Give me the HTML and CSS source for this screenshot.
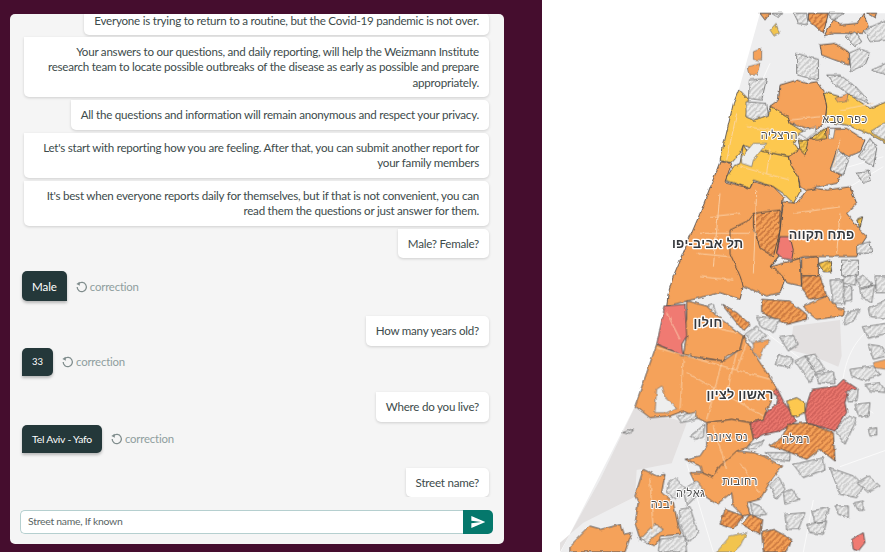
FILE: index.html
```
<!DOCTYPE html>
<html lang="en">
<head>
<meta charset="utf-8">
<title>Covid-19 report</title>
<link rel="stylesheet" href="styles.css">
</head>
<body>
<main class="chat-side">
  <section class="card">
    <div class="messages">
      <p class="bot bot-first">Everyone is trying to return to a routine, but the Covid-19 pandemic is not over.</p>
      <p class="bot">Your answers to our questions, and daily reporting, will help the Weizmann Institute research team to locate possible outbreaks of the disease as early as possible and prepare appropriately.</p>
      <p class="bot">All the questions and information will remain anonymous and respect your privacy.</p>
      <p class="bot">Let's start with reporting how you are feeling. After that, you can submit another report for your family members</p>
      <p class="bot">It's best when everyone reports daily for themselves, but if that is not convenient, you can read them the questions or just answer for them.</p>
      <p class="bot">Male? Female?</p>
      <div class="answer gap-a">
        <span class="user user-lg">Male</span>
        <span class="fix"><svg class="fix-icon" viewBox="0 0 24 24"><path d="M6.5 7A8.5 8.5 0 1 1 4 13"/><path class="fix-head" d="M2.5 7.5 8.5 3 9 10.5z"/></svg>correction</span>
      </div>
      <p class="bot gap-b">How many years old?</p>
      <div class="answer gap-d">
        <span class="user user-num">33</span>
        <span class="fix"><svg class="fix-icon" viewBox="0 0 24 24"><path d="M6.5 7A8.5 8.5 0 1 1 4 13"/><path class="fix-head" d="M2.5 7.5 8.5 3 9 10.5z"/></svg>correction</span>
      </div>
      <p class="bot gap-e">Where do you live?</p>
      <div class="answer">
        <span class="user user-sm">Tel Aviv - Yafo</span>
        <span class="fix"><svg class="fix-icon" viewBox="0 0 24 24"><path d="M6.5 7A8.5 8.5 0 1 1 4 13"/><path class="fix-head" d="M2.5 7.5 8.5 3 9 10.5z"/></svg>correction</span>
      </div>
      <p class="bot gap-b">Street name?</p>
    </div>
    <form class="composer">
      <input class="composer-input" type="text" placeholder="Street name, If known">
      <button class="composer-send" type="button" aria-label="Send"><svg viewBox="0 0 24 24" class="send-icon"><path d="M2 21l21-9L2 3v7l15 2-15 2z"/></svg></button>
    </form>
  </section>
</main>
<aside class="map-side">
<svg class="map" viewBox="6 0 1029 1656" preserveAspectRatio="xMinYMin slice">
  <defs>
    <pattern id="hg" width="12" height="12" patternUnits="userSpaceOnUse" patternTransform="rotate(-45)"><rect width="12" height="12" fill="#eeeeee"/><rect width="12" height="5" fill="#c6c6c6"/></pattern>
    <pattern id="ho" width="13" height="13" patternUnits="userSpaceOnUse" patternTransform="rotate(-45)"><rect width="13" height="13" fill="#f5a258"/><rect width="13" height="5" fill="#c9773f"/></pattern>
    <pattern id="hr" width="10" height="10" patternUnits="userSpaceOnUse" patternTransform="rotate(-45)"><rect width="10" height="10" fill="#ee7a70"/><rect width="10" height="4" fill="#c75a55"/></pattern>
    <pattern id="hy" width="12" height="12" patternUnits="userSpaceOnUse" patternTransform="rotate(-45)"><rect width="12" height="12" fill="#fbc850"/><rect width="12" height="5" fill="#c9a040"/></pattern>
    <filter id="rough" filterUnits="userSpaceOnUse" x="0" y="0" width="1040" height="1660" color-interpolation-filters="sRGB">
      <feTurbulence type="fractalNoise" baseFrequency="0.05" numOctaves="2" seed="4" result="n"/>
      <feDisplacementMap in="SourceGraphic" in2="n" scale="10" xChannelSelector="R" yChannelSelector="G"/>
      <feGaussianBlur stdDeviation="0.9"/>
    </filter>
    <filter id="soft" filterUnits="userSpaceOnUse" x="0" y="0" width="1040" height="1660"><feGaussianBlur stdDeviation="0.9"/></filter>
  </defs>

  <g class="base" filter="url(#soft)">
    <polygon class="land" points="660,40 1040,40 1040,1660 60,1660 285,1218 350,1030 375,920 420,828 480,640 540,480 597,268"/>
    <polygon class="sand" points="285,1220 330,1252 400,1256 440,1270 395,1390 290,1410 285,1490 130,1568 60,1628 60,1656 180,1440"/>
    <polygon class="sand" points="760,978 900,960 905,1068 895,1100 810,1065 750,1050"/>
    <path class="road-g" d="M690,190 640,300M860,520 1030,470M930,560 1030,500M680,1000 1000,1240M900,1400 1040,1350M820,1500 790,1656M440,1390 520,1656M1040,960C960,990 910,1060 905,1180M830,240 770,160"/>
  </g>

  <g filter="url(#rough)">
    <polygon class="y" points="597,268 625,297 618,350 640,360 685,345 690,318 745,350 750,370 790,395 775,405 760,430 775,450 750,470 650,450 610,435 600,460 575,488 540,482 580,310"/>
    <polygon class="y" points="610,435 600,490 580,500 555,540 630,565 640,540 700,560 730,580 760,610 780,575 775,530 750,490 745,470 650,450 625,460"/>
    <polygon class="y" points="850,275 900,290 930,285 990,325 1040,305 1040,430 985,400 920,375 855,365 860,320"/>
    <polygon class="o" points="690,318 715,300 720,255 770,240 800,250 830,245 850,275 860,320 855,365 835,385 800,385 750,370 745,350"/>
    <polygon class="o" points="775,450 800,420 860,385 920,385 975,420 960,455 925,470 890,450 870,510 905,525 890,550 860,555 830,560 800,575 780,560 775,530 750,490 745,470"/>
    <polygon class="o" points="540,485 575,490 555,545 630,565 640,545 700,560 730,590 725,630 715,770 690,800 738,828 720,878 680,888 610,858 600,898 540,878 500,888 440,903 380,918 385,878 400,828 480,640"/>
    <polygon class="o" points="730,605 770,610 800,570 830,565 860,570 930,560 950,610 920,640 960,690 980,710 960,740 950,770 880,770 790,770 760,780 710,760 720,690"/>
    <polygon class="o" points="690,800 780,775 785,858 740,848 730,828"/>
    <polygon class="o" points="785,775 835,770 835,828 785,828"/>
    <polygon class="o" points="850,110 880,60 900,75 950,70 970,40 985,80 965,100 880,100"/>
    <polygon class="o" points="840,135 885,130 925,155 925,195 845,165"/>
    <polygon class="o" points="980,40 1010,40 1005,55"/>
    <polygon class="o" points="660,40 690,40 675,60"/>
    <polygon class="o-s" points="640,155 665,145 665,180 640,178"/>
    <polygon class="o-s" points="625,200 660,190 650,225 630,225"/>
    <polygon class="o-s" points="885,295 925,280 920,305 895,308"/>
    <polygon class="y-s" points="690,90 708,70 718,100 702,108"/>
    <polygon class="hg" points="695,40 725,40 715,52"/>
    <polygon class="hg" points="760,40 800,40 805,75 775,70"/>
    <polygon class="ho" points="805,40 865,40 850,100 805,60"/>
    <polygon class="hg" points="865,40 910,40 880,60 870,50"/>
    <polygon class="hg" points="925,160 960,145 990,160 975,195 930,215"/>
    <polygon class="hg" points="970,90 1040,60 1040,120 990,125"/>
    <polygon class="hg" points="915,110 945,95 965,125 945,140"/>
    <polygon class="hg" points="995,210 1040,190 1040,225"/>
    <polygon class="hg" points="628,240 680,235 665,300 625,295"/>
    <polygon class="hg" points="618,305 680,310 685,345 640,360 618,350"/>
    <polygon class="hg" points="770,160 835,178 835,240 770,225"/>
    <polygon class="hg" points="860,225 900,225 940,255 990,310 930,285 880,250"/>
    <polygon class="hg" points="990,395 1040,365 1040,425"/>
    <polygon class="hg" points="955,470 990,415 1010,445 1000,500 975,485"/>
    <polygon class="hg" points="950,520 985,510 990,540 970,550"/>
    <polygon class="hg" points="870,510 895,450 925,480 910,525"/>
    <polygon class="hy" points="810,415 855,385 860,415 830,420"/>
    <polygon class="plain" points="865,385 885,385 880,415 865,415"/>
    <polygon class="plain" points="775,400 830,378 830,395 800,415"/>
    <polygon class="hy" points="775,420 805,420 795,465 780,450"/>
    <polygon class="plain" points="605,470 640,430 680,430 640,480 635,500 605,490"/>
    <polygon class="hg" points="905,780 955,780 955,828 905,828"/>
    <polygon class="hy" points="835,790 870,780 875,815 850,815"/>
    <polygon class="hg" points="950,735 990,725 995,760 950,760"/>
    <polygon class="hy" points="950,660 968,650 960,685"/>
    <polygon class="ho" points="640,640 720,630 720,690 700,770 660,745 640,680"/>
    <polygon class="r" points="720,710 750,710 760,750 755,780 730,775 710,760"/>
    <path class="road" d="M590,340 560,480M620,380 760,400M600,500 750,540M690,450 680,520M750,360 840,350M900,420 880,500M540,580 520,800M650,570 640,820M480,700 630,700M760,640 900,620M900,640 890,760M900,330 1000,310M510,650 600,640M470,760 570,770M580,840 480,830"/>
    <polyline class="inner" points="640,640 620,665 570,690 570,760 600,828 610,858"/>
    <polyline class="inner" points="690,800 715,770"/>

    <g transform="translate(0 828)">
      <polygon class="o" points="790,90 860,60 890,95 915,100 910,120 830,130 805,110"/>
      <polygon class="ho" points="785,0 840,0 860,60 810,70 785,40"/>
      <polygon class="ho" points="665,70 750,75 800,115 800,130 740,145 665,110"/>
      <polygon class="ho" points="545,85 590,110 630,145 610,165"/>
      <polygon class="hg" points="490,95 520,85 530,115 505,110"/>
      <polygon class="hg" points="615,175 650,150 680,180 640,205"/>
      <polygon class="hg" points="650,120 720,130 700,170 660,150"/>
      <polygon class="hg" points="870,12 910,12 915,85 880,85"/>
      <polygon class="hg" points="910,32 935,32 935,72 910,77"/>
      <polygon class="hg" points="910,0 950,0 945,27 910,22"/>
      <polygon class="hg" points="950,12 970,0 1000,27 960,37"/>
      <polygon class="hg" points="960,42 1005,27 995,77 965,67"/>
      <polygon class="hg" points="1005,0 1040,0 1040,50 1010,50"/>
      <polygon class="hg" points="985,97 1040,72 1040,127 990,122"/>
      <polygon class="hg" points="910,142 925,107 960,102 945,132 915,147"/>
      <polygon class="hg" points="970,152 1040,142 1040,172 985,187"/>
      <polygon class="hg" points="720,185 760,178 775,205 745,225"/>
      <polygon class="hg" points="715,235 760,250 750,275 705,265"/>
      <polygon class="hg" points="765,255 795,240 830,290 810,320"/>
      <polygon class="hg" points="795,240 825,235 855,280 830,290"/>
      <polygon class="hg" points="830,295 880,285 885,320 835,320"/>
      <polygon class="hg" points="930,280 1000,270 1020,295 975,315 935,300"/>
      <polygon class="hg" points="985,205 1020,210 1040,240 1000,250"/>
      <polygon class="hg" points="975,325 1020,320 1040,350 990,345"/>
      <polygon class="o-s" points="1000,260 1040,250 1040,280 1005,275"/>
      <polygon class="o-s" points="640,200 690,190 670,220 660,250 640,225"/>
      <polygon class="o" points="440,75 500,90 530,120 570,150 610,180 600,220 560,240 550,255 430,235 440,180 420,205 440,130"/>
      <polygon class="r" points="375,90 435,85 440,180 425,205 430,240 390,220 350,205"/>
      <polygon class="o" points="350,205 430,240 550,255 600,220 610,180 640,230 710,335 680,400 670,430 630,440 575,430 500,440 430,405 390,420 330,425 285,390"/>
      <polygon class="plain" points="345,410 350,340 365,330 380,370 410,395 380,410"/>
      <polygon class="hr" points="710,335 730,375 770,435 720,465 670,475 640,490 630,440 670,430 680,405 710,385 715,360 695,350"/>
      <polygon class="hr" points="815,340 890,330 910,310 955,340 925,345 915,380 920,410 885,465 800,440 795,410 805,370"/>
      <polygon class="ho" points="745,445 800,440 880,470 885,555 840,520 800,550 740,525 690,510 725,485"/>
      <polygon class="y" points="740,375 770,365 795,380 795,410 770,420 755,420"/>
      <polygon class="hg" points="920,345 955,340 950,375 925,378"/>
      <polygon class="hg" points="945,385 990,380 985,420 955,420"/>
      <polygon class="hg" points="885,465 925,420 950,430 915,505"/>
      <polygon class="hg" points="410,420 470,408 470,430 425,440"/>
      <polygon class="hg" points="450,480 495,445 490,480 465,490"/>
      <polygon class="hg" points="245,470 280,458 270,475"/>
      <polygon class="hg" points="675,530 750,530 750,555 700,550"/>
      <polygon class="hg" points="760,565 850,545 855,580 790,605"/>
      <polygon class="hg" points="620,510 670,495 650,520 625,520"/>
      <polygon class="hg" points="870,575 940,600 970,630 950,665 900,655"/>
      <polygon class="hg" points="950,620 985,600 1020,630 985,650"/>
      <polygon class="hg" points="985,460 1010,455 1010,480 990,480"/>
      <polygon class="hg" points="940,680 970,675 970,700 950,700"/>
      <polygon class="o" points="500,440 575,430 630,440 640,490 620,515 590,525 580,545 540,570 520,605 485,590 480,570 435,550 480,540 500,510"/>
      <polygon class="o" points="450,590 485,590 520,605 540,570 590,525 640,530 670,540 725,570 695,610 660,670 620,680 630,715 610,720 580,690 575,650 530,685 480,650"/>
      <polygon class="hg" points="385,620 405,605 440,640 410,670 380,650"/>
      <polygon class="hg" points="430,640 470,615 490,640 440,690"/>
      <polygon class="hg" points="690,630 715,600 735,640 710,670"/>
      <polygon class="hg" points="730,650 755,640 780,670 735,685"/>
      <polygon class="hg" points="735,715 795,710 775,760 740,760"/>
      <polygon class="hg" points="630,680 660,690 680,715 640,720"/>
      <polygon class="hg" points="815,705 865,695 855,735 825,740"/>
      <polygon class="hg" points="800,745 860,735 850,775 810,770"/>
      <polygon class="hg" points="885,690 925,690 925,725 895,715"/>
      <polygon class="o" points="310,580 350,600 375,595 365,650 400,680 415,750 425,775 365,780 345,810 300,790 285,740 295,680 285,660"/>
      <polygon class="hg" points="420,700 450,695 475,770 445,800 415,740"/>
      <polygon class="hg" points="300,790 345,745 370,760 345,780 320,800"/>
      <polygon class="hg" points="360,790 435,780 440,828 355,828"/>
      <polygon class="o" points="90,810 150,750 185,760 240,745 250,775 275,770 255,828 90,828"/>
      <polygon class="ho" points="555,700 610,720 580,760 540,745"/>
      <polygon class="ho" points="630,715 665,730 660,775 605,745"/>
      <polygon class="ho" points="665,770 700,760 755,790 740,828 670,828"/>
      <polygon class="y-s" points="530,828 570,780 620,770 600,810 580,828"/>
      <polygon class="r" points="935,790 970,770 975,800 955,825 940,820"/>
      <path class="road" d="M430,250 420,400M545,260 500,430M350,215 690,310M440,290 670,420M590,230 560,350M620,200 590,280M380,110 420,190M460,140 590,170M520,450 560,580M500,490 630,490M600,560 660,650M330,610 340,770"/>
    </g>
  </g>

  <g class="labels">
    <text class="lbl" x="915" y="370">כפר סבא</text>
    <text class="lbl" x="718" y="416">הרצליה</text>
    <text class="lbl lbl-b" x="845" y="716">פתח תקווה</text>
    <text class="lbl lbl-b" x="503" y="744">תל אביב-יפו</text>
    <text class="lbl lbl-b" x="504" y="980">חולון</text>
    <text class="lbl lbl-b" x="600" y="1196">ראשון לציון</text>
    <text class="lbl" x="562" y="1322">נס ציונה</text>
    <text class="lbl" x="768" y="1328">רמלה</text>
    <text class="lbl" x="600" y="1454">רחובות</text>
    <text class="lbl" x="452" y="1492">גאליה</text>
    <text class="lbl" x="366" y="1524">יבנה</text>
  </g>
</svg>
</aside>
</body>
</html>
```

FILE: styles.css
```
* { box-sizing: border-box; }
html, body { height: 100%; margin: 0; }
body {
  display: flex;
  overflow: hidden;
  background: #fff;
  font-family: "Lato", "Noto Sans", sans-serif;
  color: #3d4b4b;
}
.chat-side {
  flex: 0 0 542px;
  height: 552px;
  padding: 14px 38.5px 8px 9.5px;
  background: #450d2e;
}
.card {
  display: flex;
  flex-direction: column;
  height: 100%;
  background: #f5f5f5;
  border-radius: 5px;
  overflow: hidden;
}
.messages {
  flex: 1;
  min-height: 0;
  display: flex;
  flex-direction: column;
  align-items: flex-end;
  justify-content: flex-end;
  overflow: hidden;
  padding-right: 14.5px;
  gap: 3px;
}
.bot {
  flex: none;
  margin: 0;
  max-width: 465px;
  padding: 7px 10px;
  background: #fff;
  border-radius: 0 5px 5px 5px;
  box-shadow: 0 1px 3px rgba(0, 0, 0, .16);
  font-size: 11.6px;
  letter-spacing: -0.24px;
  line-height: 15.5px;
  text-align: right;
}
.bot-first { margin-bottom: -1.5px; padding-top: 0; }
.answer {
  align-self: flex-start;
  display: flex;
  align-items: center;
  margin-left: 12.5px;
}
.gap-a { margin-top: 10px; }
.gap-b { margin-top: 12px; }
.gap-d { margin-top: -1px; }
.gap-e { margin-top: 13.5px; }
.user {
  display: flex;
  align-items: center;
  background: #24383a;
  color: #fff;
  box-shadow: 0 2px 3px rgba(0, 0, 0, .25);
  border-radius: 5px 5px 5px 0;
  padding: 0 10px;
}
.user-lg { height: 30px; font-size: 11.6px; letter-spacing: -0.1px; border-radius: 5px 5px 0 5px; }
.user-num { height: 28px; font-size: 9.5px; }
.user-sm { height: 28px; font-size: 10.4px; letter-spacing: -0.22px; }
.fix {
  display: flex;
  align-items: center;
  margin-left: 8px;
  font-size: 11.4px;
  letter-spacing: -0.2px;
  color: #8f9e9e;
}
.fix-icon {
  width: 13px;
  height: 13px;
  margin-right: 2px;
  fill: none;
  stroke: #7f8c8c;
  stroke-width: 2.3;
}
.fix-head { fill: #7f8c8c; stroke: none; }
.composer {
  flex: none;
  display: flex;
  height: 24px;
  margin: 13px 10.5px 10px 10.5px;
}
.composer-input {
  flex: 1;
  min-width: 0;
  height: 100%;
  padding: 0 7px 2px;
  border: 1px solid #b5cfcf;
  border-right: 0;
  border-radius: 5px 0 0 5px;
  background: #fff;
  outline: none;
  font: 10.4px "Lato", "Noto Sans", sans-serif;
  letter-spacing: -0.25px;
}
.composer-input::placeholder { color: #5a6565; opacity: 1; }
.composer-send {
  flex: 0 0 30px;
  display: flex;
  align-items: center;
  justify-content: center;
  padding: 0;
  border: 0;
  border-radius: 0 5px 5px 0;
  background: #05786c;
}
.send-icon { width: 16px; height: 16px; fill: #fff; }

.map-side { flex: 1; min-width: 0; height: 552px; }
.map { display: block; width: 100%; height: 100%; }
.map polygon { stroke: #4a4646; stroke-width: 2.6; stroke-linejoin: round; }
.map .land { fill: #eeeeef; stroke: none; }
.map .sand { fill: #e3e0e0; stroke: none; }
.y { fill: #fdc84f; }
.o { fill: #f5a25a; }
.r { fill: #f07a72; }
.map .o-s { fill: #f5a25a; stroke: #6d6a6a; stroke-width: 2; }
.map .y-s { fill: #f2c44e; stroke: #6d6a6a; stroke-width: 2; }
.map .hg { fill: url(#hg); stroke: #5c5c5c; stroke-width: 2.2; }
.ho { fill: url(#ho); }
.hr { fill: url(#hr); }
.hy { fill: url(#hy); }
.map .plain { fill: #eeeeee; stroke: #6d6a6a; stroke-width: 2; }
.road { fill: none; stroke: #fcd9b5; stroke-width: 2.8; opacity: .9; }
.road-g { fill: none; stroke: #fafafa; stroke-width: 3; }
.inner { fill: none; stroke: #4a4646; stroke-width: 2.6; }
.lbl {
  font-family: "Liberation Sans", "DejaVu Sans", sans-serif;
  font-size: 33px;
  letter-spacing: 1.5px;
  direction: rtl;
  text-anchor: middle;
  fill: #4a4a4a;
  stroke: #fff;
  stroke-width: 6px;
  paint-order: stroke;
  stroke-linejoin: round;
}
.lbl-b { font-size: 38px; letter-spacing: 1px; font-weight: 700; fill: #36383c; stroke-width: 8px; }
```
